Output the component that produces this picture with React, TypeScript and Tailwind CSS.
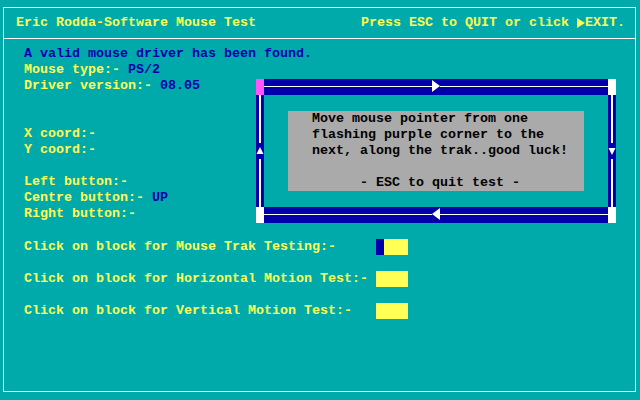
const Y = "text-[#ffff55]";
const B = "text-[#0000aa]";

const HLine = () => <div className="flex-1 h-px mt-[6px] bg-white" />;
const VLine = () => <div className="flex-1 w-[2px] bg-white" />;

const Row = ({ label, value }: { label?: string; value?: string }) => (
  <div className={`h-4 leading-4 whitespace-pre ${Y}`}>
    {label}
    {value && <span className={B}>{value}</span>}
  </div>
);

const Track = () => (
  <div className="mt-[17px] w-[360px] h-[144px] flex flex-col">
    <div className="flex h-4">
      <div className="w-2 h-4 bg-[#ff55ff]" />
      <div className="flex-1 bg-[#0000aa] flex items-start pt-px">
        <HLine />
        <svg width="8" height="12" viewBox="0 0 8 12">
          <polygon points="0,0 8,6 0,12" fill="#fff" />
        </svg>
        <HLine />
      </div>
      <div className="w-2 h-4 bg-white" />
    </div>
    <div className="flex h-[112px]">
      <div className="w-2 bg-[#0000aa] flex flex-col items-center">
        <VLine />
        <svg width="8" height="16" viewBox="0 0 8 16">
          <polygon points="4,4 7.5,11 0.5,11" fill="#fff" />
        </svg>
        <VLine />
      </div>
      <div className="flex-1 pl-6 pt-4">
        <div className="w-[296px] h-20 bg-[#aaaaaa] pl-6 text-black leading-4 whitespace-pre">
          <div>Move mouse pointer from one</div>
          <div>flashing purple corner to the</div>
          <div>next, along the trak..good luck!</div>
          <div> </div>
          <div>      - ESC to quit test -</div>
        </div>
      </div>
      <div className="w-2 bg-[#0000aa] flex flex-col items-center">
        <VLine />
        <svg width="8" height="16" viewBox="0 0 8 16">
          <polygon points="0.5,5 7.5,5 4,12" fill="#fff" />
        </svg>
        <VLine />
      </div>
    </div>
    <div className="flex h-4">
      <div className="w-2 h-4 bg-white" />
      <div className="flex-1 bg-[#0000aa] flex items-start pt-px">
        <HLine />
        <svg width="8" height="12" viewBox="0 0 8 12">
          <polygon points="8,0 0,6 8,12" fill="#fff" />
        </svg>
        <HLine />
      </div>
      <div className="w-2 h-4 bg-white" />
    </div>
  </div>
);

const ClickRow = ({ label, marker }: { label: string; marker?: boolean }) => (
  <div className="flex h-4 items-center">
    <div className={`w-[352px] leading-4 whitespace-pre ${Y}`}>{label}</div>
    <div className="w-8 h-4 bg-[#ffff55] flex">
      {marker && <div className="w-2 h-4 bg-[#0000aa]" />}
    </div>
  </div>
);

export default function App() {
  return (
    <div
      className="w-[640px] h-[400px] bg-[#00aaaa] pt-[7px] pl-[3px] font-bold text-[13.33px]"
      style={{ fontFamily: '"Liberation Mono", "DejaVu Sans Mono", monospace' }}
    >
      <div className="w-[633px] h-[385px] border border-white">
        <div className={`flex h-[31px] items-center justify-between border-b border-white pl-3 pr-[10px] whitespace-pre ${Y}`}>
          <span>Eric Rodda-Software Mouse Test</span>
          <span className="flex items-center">
            Press ESC to QUIT or click{" "}
            <svg width="8" height="12" viewBox="0 0 8 12" className="inline-block">
              <polygon points="0,1 8,6 0,11" fill="#ffff55" />
            </svg>
            EXIT.
          </span>
        </div>
        <div className="pl-5 pt-[7px]">
          <div className={`h-4 leading-4 ${B}`}>A valid mouse driver has been found.</div>
          <div className="flex items-start">
            <div className="w-[232px] flex flex-col">
              <Row label="Mouse type:- " value="PS/2" />
              <Row label="Driver version:- " value="08.05" />
              <Row />
              <Row />
              <Row label="X coord:-" />
              <Row label="Y coord:-" />
              <Row />
              <Row label="Left button:-" />
              <Row label="Centre button:- " value="UP" />
              <Row label="Right button:-" />
            </div>
            <Track />
          </div>
          <div className="mt-4 flex flex-col gap-4">
            <ClickRow label="Click on block for Mouse Trak Testing:-" marker />
            <ClickRow label="Click on block for Horizontal Motion Test:-" />
            <ClickRow label="Click on block for Vertical Motion Test:-" />
          </div>
        </div>
      </div>
    </div>
  );
}
